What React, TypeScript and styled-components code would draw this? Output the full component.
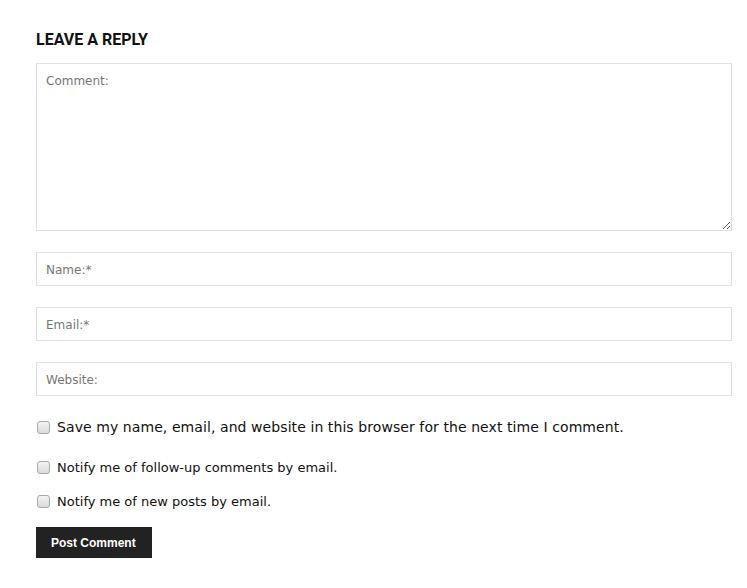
import React from 'react'
import styled, { createGlobalStyle } from 'styled-components'

const GlobalStyle = createGlobalStyle`
    body {
        margin: 0;
        background: #fff;
        font-family: "DejaVu Sans", Verdana, sans-serif;
    }
`

const Wrapper = styled.div`
    width: 696px;
    padding: 30px 0 30px 36px;
`

const Title = styled.h3`
    margin: 0 0 14px;
    font-family: Roboto, "Liberation Sans", sans-serif;
    font-weight: 700;
    font-size: 16px;
    line-height: 19px;
    color: #111;
    text-transform: uppercase;
`

const Form = styled.form`
    display: flex;
    flex-direction: column;
`

const fieldBase = `
    box-sizing: border-box;
    width: 100%;
    border: 1px solid #e1e1e1;
    background: #fff;
    font-family: "DejaVu Sans", Verdana, sans-serif;
    font-size: 12px;
    color: #333;
    outline: none;
    &::placeholder {
        color: #777;
    }
`

const TextArea = styled.textarea`
    ${fieldBase}
    height: 168px;
    padding: 9px 9px 8px;
    margin-bottom: 21px;
    line-height: 16px;
    resize: vertical;
`

const Input = styled.input`
    ${fieldBase}
    height: 34px;
    padding: 9px 9px 7px;
    margin-bottom: 21px;
`

const CheckRow = styled.label<{ $big?: boolean }>`
    display: flex;
    align-items: center;
    gap: 7px;
    margin-top: ${p => (p.$big ? '1px' : '0')};
    margin-bottom: ${p => (p.$big ? '21px' : '15px')};
    font-size: ${p => (p.$big ? '14px' : '13px')};
    letter-spacing: ${p => (p.$big ? '0.08px' : '0')};
    line-height: 19px;
    color: #111;
    cursor: pointer;
`

const Box = styled.input`
    appearance: none;
    flex: none;
    width: 13px;
    height: 13px;
    margin: 0 0 0 1px;
    border: 1px solid #a9a9a9;
    border-radius: 3px;
    background: linear-gradient(#f3f3f3, #dadada);
    box-sizing: border-box;
`

const Submit = styled.button`
    align-self: flex-start;
    margin-top: 1px;
    height: 31px;
    padding: 0 16px 0 15px;
    border: none;
    background: #222;
    color: #fff;
    font-family: "Liberation Sans", Arial, sans-serif;
    font-weight: 700;
    font-size: 12px;
    cursor: pointer;
`

const App = () => {
    return (
        <>
            <GlobalStyle />
            <Wrapper>
                <Title>Leave a Reply</Title>
                <Form onSubmit={e => e.preventDefault()}>
                    <TextArea placeholder="Comment:" />
                    <Input type="text" placeholder="Name:*" />
                    <Input type="email" placeholder="Email:*" />
                    <Input type="url" placeholder="Website:" />
                    <CheckRow $big>
                        <Box type="checkbox" />
                        Save my name, email, and website in this browser for the next time I comment.
                    </CheckRow>
                    <CheckRow>
                        <Box type="checkbox" />
                        Notify me of follow-up comments by email.
                    </CheckRow>
                    <CheckRow>
                        <Box type="checkbox" />
                        Notify me of new posts by email.
                    </CheckRow>
                    <Submit type="submit">Post Comment</Submit>
                </Form>
            </Wrapper>
        </>
    )
}

export default App
